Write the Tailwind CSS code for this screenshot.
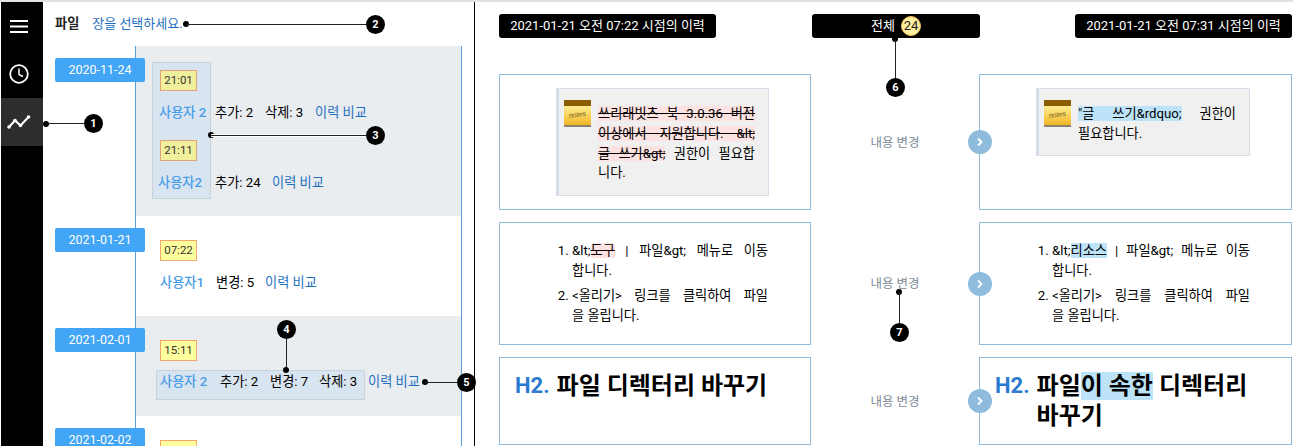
<!DOCTYPE html>
<html lang="ko"><head><meta charset="utf-8">
<script src="https://cdn.jsdelivr.net/npm/@tailwindcss/browser@4"></script>
</head>
<body class="m-0 bg-white">
<div class="relative w-[1293px] h-[446px] overflow-hidden flex border-t-2 border-[#e2e2e2] pl-px text-[13.2px] leading-[20px] text-black font-['Roboto','Noto_Sans_CJK_KR',sans-serif]">

  <!-- sidebar -->
  <nav class="w-[42px] shrink-0 bg-black flex flex-col text-white">
    <div class="h-[48px] pr-[6px] flex items-center justify-center">
      <svg width="18" height="13" viewBox="0 0 18 13"><path d="M0 1h18M0 6.500h18M0 12h18" stroke="#fff" stroke-width="1.800"/></svg>
    </div>
    <div class="h-[48px] pr-[6px] flex items-center justify-center">
      <svg width="20" height="20" viewBox="0 0 20 20" fill="none" stroke="#fff"><circle cx="10" cy="10" r="8.800" stroke-width="1.800"/><path d="M10 4.500V10.500L14 12.500" stroke-width="1.500"/></svg>
    </div>
    <div class="h-[48px] pr-[6px] bg-[#2d2d2d] flex items-center justify-center">
      <svg width="24" height="16" viewBox="0 0 24 16" fill="none"><path d="M2 13L8 6.500L13.500 11.500L21.500 3" stroke="#fff" stroke-width="2"/><g fill="#fff"><circle cx="2" cy="13" r="1.800"/><circle cx="8" cy="6.500" r="1.800"/><circle cx="13.500" cy="11.500" r="1.800"/><circle cx="21.500" cy="3" r="1.800"/></g></svg>
    </div>
  </nav>

  <!-- history list -->
  <section class="w-[432px] shrink-0 border-r border-black">
    <div class="h-[44px] pl-[12px] pt-[12px] flex gap-[13px]">
      <span class="font-semibold text-[#222]">파일</span>
      <span class="text-[#1e6fc0] text-[13px]">장을 선택하세요.</span>
    </div>
    <div class="ml-[92px] w-[327px] border-x border-[#5a9fdc]">

      <div class="relative h-[170px] bg-[#eaedf0] flex pl-[16px] pt-[16px]">
        <div class="absolute left-[-81px] top-[12px] w-[90px] h-[24px] rounded-[2px] bg-[#42a5f5] text-white text-center text-[12.5px] leading-[24px]">2020-11-24</div>
        <div class="w-[59px] h-[137px] bg-[#d8e4ef] border border-[#c8d2da] flex flex-col pl-[7px] pt-[7px]">
          <span class="w-[37px] h-[21px] bg-[#f0f09c] border border-[#e2a27c] text-center text-[11.5px] leading-[19px] text-[#333]">21:01</span>
          <span class="mt-[12px] h-[20px] -ml-[1px] text-[#4a9de8] whitespace-nowrap font-medium">사용자 2</span>
          <span class="mt-[17px] w-[37px] h-[21px] bg-[#f0f09c] border border-[#e2a27c] text-center text-[11.5px] leading-[19px] text-[#333]">21:11</span>
          <span class="mt-[12px] h-[20px] -ml-[2px] text-[#4a9de8] whitespace-nowrap font-medium">사용자2</span>
        </div>
        <div class="flex flex-col pl-[4px] pt-[41px] gap-[50px]">
          <div class="h-[20px] flex whitespace-nowrap"><span class="w-[50px]">추가: 2</span><span class="w-[50px]">삭제: 3</span><span class="text-[#1e6fc0]">이력 비교</span></div>
          <div class="h-[20px] flex whitespace-nowrap"><span class="w-[57px]">추가: 24</span><span class="text-[#1e6fc0]">이력 비교</span></div>
        </div>
      </div>

      <div class="relative h-[100px] bg-white pl-[24px] pt-[24px]">
        <div class="absolute left-[-81px] top-[12px] w-[90px] h-[24px] rounded-[2px] bg-[#42a5f5] text-white text-center text-[12.5px] leading-[24px]">2021-01-21</div>
        <div class="w-[37px] h-[21px] bg-[#ffff9e] border border-[#f5a66e] text-center text-[11.5px] leading-[19px] text-[#333]">07:22</div>
        <div class="mt-[12px] h-[20px] flex whitespace-nowrap"><span class="w-[56px] text-[#4a9de8] font-medium">사용자1</span><span class="w-[49px]">변경: 5</span><span class="text-[#1e6fc0]">이력 비교</span></div>
      </div>

      <div class="relative h-[100px] bg-[#eaedf0] pl-[24px] pt-[24px]">
        <div class="absolute left-[-81px] top-[12px] w-[90px] h-[24px] rounded-[2px] bg-[#42a5f5] text-white text-center text-[12.5px] leading-[24px]">2021-02-01</div>
        <div class="w-[37px] h-[21px] bg-[#ffff9e] border border-[#f5a66e] text-center text-[11.5px] leading-[19px] text-[#333]">15:11</div>
        <div class="mt-[9px] -ml-[4px] flex items-start whitespace-nowrap">
          <div class="w-[209px] h-[30px] bg-[#d8e4ef] border border-[#c8d2da] pl-[3px] pt-[1px] flex items-start"><span class="w-[60px] text-[#4a9de8] font-medium">사용자 2</span><span class="w-[50px]">추가: 2</span><span class="w-[49px]">변경: 7</span><span>삭제: 3</span></div>
          <span class="ml-[3px] pt-[2px] text-[#1e6fc0]">이력 비교</span>
        </div>
      </div>

      <div class="relative h-[100px] bg-white pl-[24px] pt-[24px]">
        <div class="absolute left-[-81px] top-[12px] w-[90px] h-[24px] rounded-[2px] bg-[#42a5f5] text-white text-center text-[12.5px] leading-[24px]">2021-02-02</div>
        <div class="w-[37px] h-[21px] bg-[#ffff9e] border border-[#f5a66e]"></div>
      </div>
    </div>
  </section>

  <!-- comparison -->
  <main class="flex-1 pl-[24px] pt-[12px]">
    <div class="grid grid-cols-[312px_168px_313px] h-[24px] text-white text-[13px]">
      <div class="w-[217px] h-[24px] bg-black rounded-[3px] text-center leading-[24px] whitespace-nowrap">2021-01-21 오전 07:22 시점의 이력</div>
      <div class="ml-px w-[168px] h-[24px] bg-black rounded-[3px] flex items-center justify-center gap-[6px]">
        <span>전체</span>
        <span class="w-[20px] h-[20px] rounded-full bg-[#ffeea0] border border-[#f3c05a] text-[#222] text-center leading-[18px]">24</span>
      </div>
      <div class="justify-self-end w-[217px] h-[24px] bg-black rounded-[3px] text-center leading-[24px] whitespace-nowrap">2021-01-21 오전 07:31 시점의 이력</div>
    </div>

    <!-- row 1 -->
    <div class="mt-[36px] grid grid-cols-[312px_168px_313px] h-[136px]">
      <div class="border border-[#8fbcdc] pl-[56px] pt-[13px]">
        <div class="w-[213px] h-[108px] bg-[#f0f0f0] border border-[#d5dde9] border-l-[3px] flex pt-[11px] pl-[5px]">
          <svg class="shrink-0" width="27" height="27" viewBox="0 0 27 27"><defs><linearGradient id="n1" x1="0" y1="0" x2="0" y2="1"><stop offset="0" stop-color="#fff09a"/><stop offset="1" stop-color="#eeb21d"/></linearGradient></defs><rect y="5" width="27" height="21" fill="url(#n1)"/><rect width="27" height="6" fill="#8a5d00"/><rect y="25" width="27" height="2" fill="#8a8170"/><text x="13.500" y="17" text-anchor="middle" font-size="7" font-style="italic" font-family="Liberation Sans" fill="#6b5a20" transform="rotate(-7 13.500 15)">notes</text></svg>
          <div class="ml-[7px] mt-[4px] w-[157px] leading-[19.8px]">
            <span class="block whitespace-nowrap [text-align-last:justify]"><span class="line-through bg-[#fde2e2]">쓰리래빗츠 북 3.0.36 버전</span></span>
            <span class="block whitespace-nowrap [text-align-last:justify]"><span class="line-through bg-[#fde2e2]">이상에서 지원합니다. &amp;lt;</span></span>
            <span class="block whitespace-nowrap [text-align-last:justify]"><span class="line-through bg-[#fde2e2]">글 쓰기&amp;gt;</span> 권한이 필요합</span>
            <span class="block">니다.</span>
          </div>
        </div>
      </div>
      <div class="relative flex items-center justify-center pt-[1px] text-[12.5px] text-[#7d8a96]">내용 변경</div>
      <div class="relative border border-[#8fbcdc] pl-[56px] pt-[13px]">
        <div class="absolute left-[-12px] top-[55px] w-[24px] h-[24px] rounded-full bg-[#8fbcdc] flex items-center justify-center"><svg width="8" height="10" viewBox="0 0 8 10" fill="none"><path d="M2 1.500L5.500 5L2 8.500" stroke="#fff" stroke-width="1.800"/></svg></div>
        <div class="w-[214px] h-[68px] bg-[#f0f0f0] border border-[#d5dde9] border-l-[3px] flex pt-[11px] pl-[5px]">
          <svg class="shrink-0" width="27" height="27" viewBox="0 0 27 27"><defs><linearGradient id="n2" x1="0" y1="0" x2="0" y2="1"><stop offset="0" stop-color="#fff09a"/><stop offset="1" stop-color="#eeb21d"/></linearGradient></defs><rect y="5" width="27" height="21" fill="url(#n2)"/><rect width="27" height="6" fill="#8a5d00"/><rect y="25" width="27" height="2" fill="#8a8170"/><text x="13.500" y="17" text-anchor="middle" font-size="7" font-style="italic" font-family="Liberation Sans" fill="#6b5a20" transform="rotate(-7 13.500 15)">notes</text></svg>
          <div class="ml-[7px] mt-[4px] w-[158px] leading-[19.8px]">
            <span class="block whitespace-nowrap [text-align-last:justify]"><span class="bg-[#bde3f8]">"글 쓰기&amp;rdquo;</span> 권한이</span>
            <span class="block">필요합니다.</span>
          </div>
        </div>
      </div>
    </div>

    <!-- row 2 -->
    <div class="mt-[12px] grid grid-cols-[312px_168px_313px] h-[123px]">
      <div class="border border-[#8fbcdc] pl-[56px] pt-[18px]">
        <ol class="w-[212px] list-decimal pl-[16px] leading-[20px] flex flex-col gap-[5px]">
          <li><span class="block whitespace-nowrap [text-align-last:justify]">&amp;lt;<span class="line-through bg-[#fde2e2]">도구</span> | 파일&amp;gt; 메뉴로 이동</span><span class="block">합니다.</span></li>
          <li><span class="block whitespace-nowrap [text-align-last:justify]">&lt;올리기&gt; 링크를 클릭하여 파일</span><span class="block">을 올립니다.</span></li>
        </ol>
      </div>
      <div class="flex items-center justify-center pt-[1px] text-[12.5px] text-[#7d8a96]">내용 변경</div>
      <div class="relative border border-[#8fbcdc] pl-[56px] pt-[18px]">
        <div class="absolute left-[-12px] top-[49px] w-[24px] h-[24px] rounded-full bg-[#8fbcdc] flex items-center justify-center"><svg width="8" height="10" viewBox="0 0 8 10" fill="none"><path d="M2 1.500L5.500 5L2 8.500" stroke="#fff" stroke-width="1.800"/></svg></div>
        <ol class="w-[214px] list-decimal pl-[16px] leading-[20px] flex flex-col gap-[5px]">
          <li><span class="block whitespace-nowrap [text-align-last:justify]">&amp;lt;<span class="bg-[#bde3f8]">리소스</span> | 파일&amp;gt; 메뉴로 이동</span><span class="block">합니다.</span></li>
          <li><span class="block whitespace-nowrap [text-align-last:justify]">&lt;올리기&gt; 링크를 클릭하여 파일</span><span class="block">을 올립니다.</span></li>
        </ol>
      </div>
    </div>

    <!-- row 3 -->
    <div class="mt-[12px] grid grid-cols-[312px_168px_313px] h-[88px]">
      <div class="border border-[#8fbcdc] pl-[15px] pt-[13px] flex items-start gap-[7px] text-[24px] leading-[30px] font-bold">
        <span class="text-[#2a7bd0] text-[22px]">H2.</span><span>파일 디렉터리 바꾸기</span>
      </div>
      <div class="flex items-center justify-center pt-[1px] text-[12.5px] text-[#7d8a96]">내용 변경</div>
      <div class="relative border border-[#8fbcdc] pl-[15px] pt-[13px] flex items-start gap-[7px] text-[24px] leading-[30px] font-bold">
        <div class="absolute left-[-12px] top-[31px] w-[24px] h-[24px] rounded-full bg-[#8fbcdc] flex items-center justify-center"><svg width="8" height="10" viewBox="0 0 8 10" fill="none"><path d="M2 1.500L5.500 5L2 8.500" stroke="#fff" stroke-width="1.800"/></svg></div>
        <span class="text-[#2a7bd0] text-[22px]">H2.</span><span class="w-[225px]">파일<span class="bg-[#bde3f8]">이 속한</span> 디렉터리 바꾸기</span>
      </div>
    </div>
  </main>

  <!-- annotation 1 -->
  <div class="absolute left-[43px] top-[119px] w-[6px] h-[6px] rounded-full bg-black"></div>
  <div class="absolute left-[46px] top-[121px] w-[40px] h-px bg-[#222]"></div>
  <div class="absolute left-[84px] top-[112px] w-[19px] h-[19px] rounded-full bg-black text-white text-[11px] font-bold leading-[19px] text-center">1</div>
  <!-- annotation 2 -->
  <div class="absolute left-[183px] top-[19px] w-[6px] h-[6px] rounded-full bg-black"></div>
  <div class="absolute left-[186px] top-[22px] w-[182px] h-px bg-[#222]"></div>
  <div class="absolute left-[366px] top-[13px] w-[19px] h-[19px] rounded-full bg-black text-white text-[11px] font-bold leading-[19px] text-center">2</div>
  <!-- annotation 3 -->
  <div class="absolute left-[208px] top-[130px] w-[6px] h-[6px] rounded-full bg-black"></div>
  <div class="absolute left-[211px] top-[133px] w-[157px] h-px bg-[#222] shadow-[0_1px_0_#fff,0_-1px_0_#fff]"></div>
  <div class="absolute left-[366px] top-[124px] w-[19px] h-[19px] rounded-full bg-black text-white text-[11px] font-bold leading-[19px] text-center">3</div>
  <!-- annotation 4 -->
  <div class="absolute left-[277px] top-[318px] w-[19px] h-[19px] rounded-full bg-black text-white text-[11px] font-bold leading-[19px] text-center">4</div>
  <div class="absolute left-[286px] top-[335px] w-px h-[33px] bg-[#222]"></div>
  <div class="absolute left-[283px] top-[365px] w-[6px] h-[6px] rounded-full bg-black"></div>
  <!-- annotation 5 -->
  <div class="absolute left-[422px] top-[377px] w-[6px] h-[6px] rounded-full bg-black"></div>
  <div class="absolute left-[425px] top-[380px] w-[34px] h-px bg-[#222]"></div>
  <div class="absolute left-[457px] top-[371px] w-[19px] h-[19px] rounded-full bg-black text-white text-[11px] font-bold leading-[19px] text-center">5</div>
  <!-- annotation 6 -->
  <div class="absolute left-[892px] top-[34px] w-[6px] h-[6px] rounded-full bg-black"></div>
  <div class="absolute left-[895px] top-[37px] w-px h-[40px] bg-[#222]"></div>
  <div class="absolute left-[886px] top-[76px] w-[19px] h-[19px] rounded-full bg-black text-white text-[11px] font-bold leading-[19px] text-center">6</div>
  <!-- annotation 7 -->
  <div class="absolute left-[896px] top-[287px] w-[6px] h-[6px] rounded-full bg-black"></div>
  <div class="absolute left-[899px] top-[290px] w-px h-[32px] bg-[#222]"></div>
  <div class="absolute left-[890px] top-[321px] w-[19px] h-[19px] rounded-full bg-black text-white text-[11px] font-bold leading-[19px] text-center">7</div>
</div>
</body></html>
